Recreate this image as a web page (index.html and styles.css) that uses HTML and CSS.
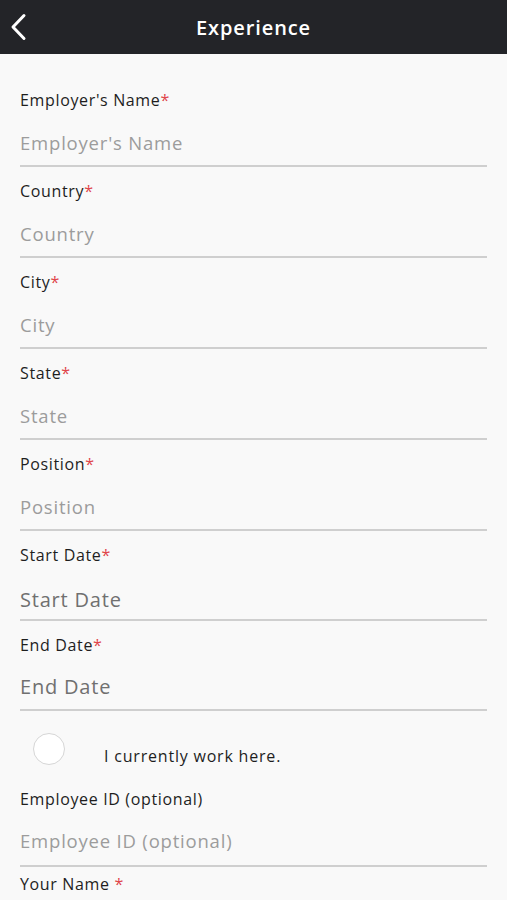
FILE: index.html
```html
<!DOCTYPE html>
<html>
<head>
<meta charset="utf-8">
<link rel="stylesheet" href="styles.css">
</head>
<body>
<header class="topbar">
  <span class="back"><svg width="22" height="30" viewBox="0 0 22 30"><path d="M15 3.5 L4 15 L15 26.5" fill="none" stroke="#fff" stroke-width="3" stroke-linecap="round" stroke-linejoin="round"/></svg></span>
  <h1 class="title">Experience</h1>
</header>
<main class="form">
  <div class="field first">
    <div class="label">Employer's Name<span class="req">*</span></div>
    <div class="input">Employer's Name</div>
  </div>
  <div class="field">
    <div class="label">Country<span class="req">*</span></div>
    <div class="input">Country</div>
  </div>
  <div class="field">
    <div class="label">City<span class="req">*</span></div>
    <div class="input">City</div>
  </div>
  <div class="field">
    <div class="label">State<span class="req">*</span></div>
    <div class="input">State</div>
  </div>
  <div class="field">
    <div class="label">Position<span class="req">*</span></div>
    <div class="input">Position</div>
  </div>
  <div class="field date">
    <div class="label">Start Date<span class="req">*</span></div>
    <div class="input">Start Date</div>
  </div>
  <div class="field date">
    <div class="label">End Date<span class="req">*</span></div>
    <div class="input">End Date</div>
  </div>
  <div class="check-row">
    <span class="circle"></span>
    <span class="check-text">I currently work here.</span>
  </div>
  <div class="field">
    <div class="label">Employee ID (optional)</div>
    <div class="input tight">Employee ID (optional)</div>
  </div>
  <div class="field last">
    <div class="label">Your Name <span class="req">*</span></div>
  </div>
</main>
</body>
</html>
```
FILE: styles.css
```css
* { box-sizing: border-box; }
html, body { margin: 0; padding: 0; }
body {
  background: #f9f9f9;
  font-family: "Open Sans", "DejaVu Sans", sans-serif;
  width: 507px;
  height: 900px;
  overflow: hidden;
}
.topbar {
  height: 54px;
  background: #232428;
  display: flex;
  align-items: center;
  justify-content: center;
  position: relative;
}
.back {
  position: absolute;
  left: 9px;
  top: 12px;
  width: 22px;
  height: 30px;
  display: block;
}
.back svg { display: block; }
.title {
  margin: 0;
  color: #fff;
  font-size: 20px;
  font-weight: 600;
  letter-spacing: 0.9px;
}
.form {
  padding: 22px 20px 0 20px;
}
.field {
  padding-top: 14px;
  width: 467px;
}
.label {
  height: 20px;
  line-height: 20px;
  font-size: 16px;
  font-weight: 500;
  letter-spacing: 0.65px;
  color: #1e1e1e;
}
.req { color: #e0454a; }
.input {
  margin-top: 18px;
  height: 39px;
  line-height: 30px;
  font-size: 18.5px;
  letter-spacing: 0.8px;
  color: #9c9c9c;
  border-bottom: 2px solid #cfcfcf;
  padding-bottom: 7px;
}
.field.date .input {
  margin-top: 20px;
  height: 36px;
  font-size: 20px;
  letter-spacing: 0.8px;
  color: #707070;
}
.field.date + .field.date .input {
  margin-top: 17px;
  height: 39px;
}
.check-row {
  height: 64px;
  display: flex;
  align-items: flex-start;
  padding-top: 22px;
}
.circle {
  margin-left: 13px;
  width: 32px;
  height: 32px;
  border-radius: 50%;
  background: #fff;
  border: 1px solid #d6d6d6;
  flex: none;
}
.check-text {
  margin-left: 39px;
  margin-top: 13px;
  line-height: 20px;
  font-size: 16px;
  font-weight: 500;
  letter-spacing: 0.8px;
  color: #1e1e1e;
}
.input.tight {
  margin-top: 17px;
  height: 41px;
}
.field.last {
  padding-top: 7px;
}
```
